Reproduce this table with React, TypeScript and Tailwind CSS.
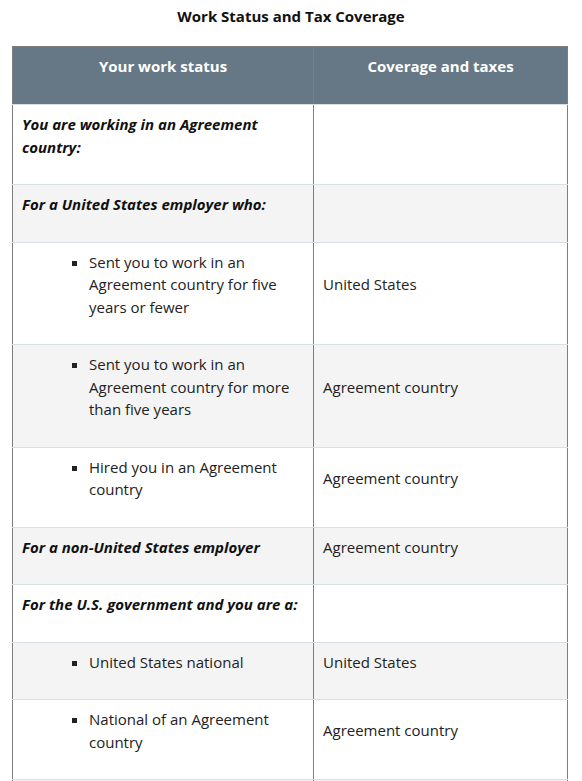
import React from 'react';

type Row = {
  status: string;
  kind: 'heading' | 'item';
  coverage?: string;
};

const rows: Row[] = [
  { status: 'You are working in an Agreement country:', kind: 'heading' },
  { status: 'For a United States employer who:', kind: 'heading' },
  { status: 'Sent you to work in an Agreement country for five years or fewer', kind: 'item', coverage: 'United States' },
  { status: 'Sent you to work in an Agreement country for more than five years', kind: 'item', coverage: 'Agreement country' },
  { status: 'Hired you in an Agreement country', kind: 'item', coverage: 'Agreement country' },
  { status: 'For a non-United States employer', kind: 'heading', coverage: 'Agreement country' },
  { status: 'For the U.S. government and you are a:', kind: 'heading' },
  { status: 'United States national', kind: 'item', coverage: 'United States' },
  { status: 'National of an Agreement country', kind: 'item', coverage: 'Agreement country' },
  { status: 'Person who is not a national of the United States or an Agreement country', kind: 'item', coverage: 'United States' },
];

export default function App() {
  return (
    <div className="bg-white min-h-screen text-[15px] leading-[22.5px] text-[#222] font-['Open_Sans',sans-serif]">
      {/* Title */}
      <h3 className="pt-[5px] text-center font-bold text-[#111]">Work Status and Tax Coverage</h3>

      <table className="ml-3 mt-[18px] w-[555px] table-fixed border-collapse">
        <colgroup>
          <col className="w-[301px]" />
          <col className="w-[254px]" />
        </colgroup>
        <thead>
          <tr className="bg-[#667785] text-white">
            <th className="border border-[#7d7d7d] border-b-[#d7dfe2] px-[9px] pt-[8px] pb-[11px] align-top font-bold">
              <p className="mb-4">Your work status</p>
            </th>
            <th className="border border-[#7d7d7d] border-b-[#d7dfe2] px-[9px] pt-[8px] pb-[11px] align-top font-bold">
              <p className="mb-4">Coverage and taxes</p>
            </th>
          </tr>
        </thead>
        <tbody>
          {rows.map((row, i) => (
            <tr key={i} className={i % 2 === 1 ? 'bg-[#f4f4f4]' : 'bg-white'}>
              <td className="border-x border-x-[#7d7d7d] border-b border-b-[#d7dfe2] px-[9px] pt-[8px] pb-[10px] align-middle">
                {row.kind === 'heading' ? (
                  <p className="mb-4 font-bold italic text-[#111]">{row.status}</p>
                ) : (
                  <ul className="mb-4 list-[square] pl-[67px] marker:text-[#222]">
                    <li>{row.status}</li>
                  </ul>
                )}
              </td>
              <td className="border-x border-x-[#7d7d7d] border-b border-b-[#d7dfe2] px-[9px] pt-[8px] pb-[10px] align-middle">
                {row.coverage ? <p className="mb-4">{row.coverage}</p> : null}
              </td>
            </tr>
          ))}
        </tbody>
      </table>
    </div>
  );
}
